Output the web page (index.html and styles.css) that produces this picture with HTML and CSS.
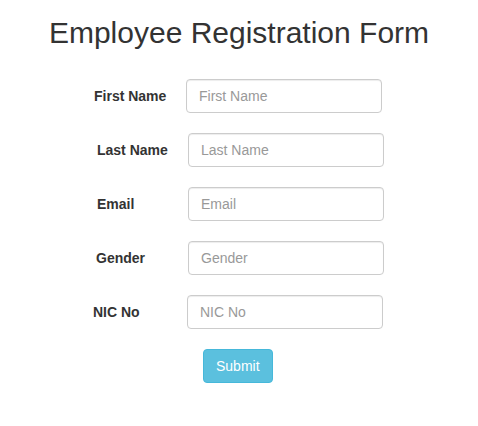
FILE: index.html
```html
<!DOCTYPE html>
<html lang="en">
<head>
<meta charset="utf-8">
<title>Employee Registration Form</title>
<link rel="stylesheet" href="styles.css">
</head>
<body>
<main class="page">
  <h1 class="title">Employee Registration Form</h1>
  <form class="form">
    <div class="row row--first">
      <label class="label" for="fn">First Name</label>
      <input class="field" id="fn" type="text" placeholder="First Name">
    </div>
    <div class="row row--last">
      <label class="label" for="ln">Last Name</label>
      <input class="field" id="ln" type="text" placeholder="Last Name">
    </div>
    <div class="row row--email">
      <label class="label" for="em">Email</label>
      <input class="field" id="em" type="text" placeholder="Email">
    </div>
    <div class="row row--gender">
      <label class="label" for="gd">Gender</label>
      <input class="field" id="gd" type="text" placeholder="Gender">
    </div>
    <div class="row row--nic">
      <label class="label" for="nic">NIC No</label>
      <input class="field" id="nic" type="text" placeholder="NIC No">
    </div>
    <div class="actions">
      <button class="btn" type="button">Submit</button>
    </div>
  </form>
</main>
</body>
</html>
```
FILE: styles.css
```css
html, body {
  margin: 0;
  padding: 0;
  background: #fff;
}

body {
  font-family: "Liberation Sans", Arial, Helvetica, sans-serif;
  font-size: 14px;
  line-height: 20px;
  color: #333;
}

.page {
  width: 478px;
}

.title {
  margin: 16px 0 30px;
  font-size: 30px;
  line-height: 33px;
  font-weight: normal;
  text-align: center;
  color: #333;
}

.form {
  margin: 0;
  padding-left: 94px;
}

.row {
  display: flex;
  align-items: center;
  height: 34px;
  margin-bottom: 20px;
}

.label {
  display: block;
  font-weight: bold;
  font-size: 14px;
  line-height: 20px;
  color: #333;
  flex: none;
  margin-bottom: 1px;
}

.row--first .label { margin-left: 0; width: 92px; }
.row--last .label { margin-left: 3px; width: 91px; }
.row--email .label { margin-left: 3px; width: 91px; }
.row--gender .label { margin-left: 2px; width: 92px; }
.row--nic .label { margin-left: -1px; width: 94px; }

.field {
  box-sizing: border-box;
  display: block;
  width: 196px;
  height: 34px;
  padding: 6px 12px;
  margin: 0;
  font-family: inherit;
  font-size: 14px;
  line-height: 20px;
  color: #555;
  background: #fff;
  border: 1px solid #ccc;
  border-radius: 4px;
  box-shadow: inset 0 1px 1px rgba(0, 0, 0, 0.075);
  outline: none;
}

.field::placeholder {
  color: #999;
  opacity: 1;
}

.actions {
  padding-left: 109px;
}

.btn {
  box-sizing: border-box;
  display: inline-block;
  height: 34px;
  padding: 6px 12px;
  margin: 0;
  font-family: inherit;
  font-size: 14px;
  line-height: 20px;
  color: #fff;
  background: #5bc0de;
  border: 1px solid #46b8da;
  border-radius: 4px;
  cursor: pointer;
}
```
